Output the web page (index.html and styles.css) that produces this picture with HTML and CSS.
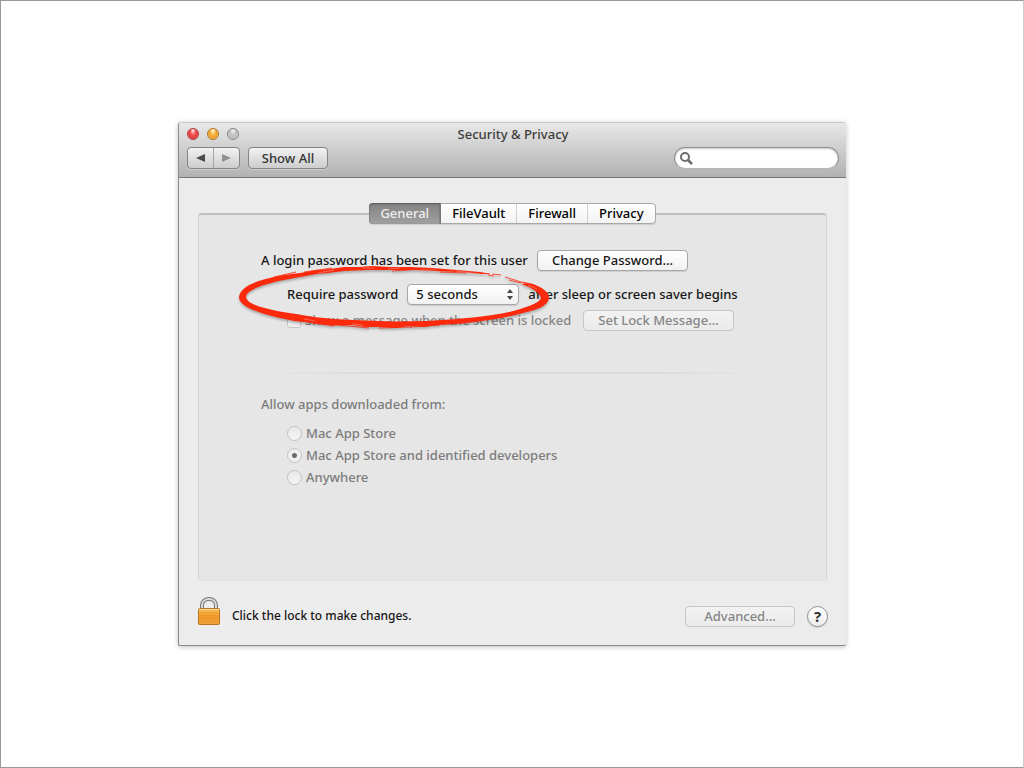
FILE: index.html
```html
<!DOCTYPE html>
<html lang="en">
<head>
    <meta charset="UTF-8">
    <meta name="viewport" content="width=device-width, initial-scale=1.0">
    <title>Security &amp; Privacy</title>
    <link rel="stylesheet" href="styles.css">
</head>
<body>
    <main class="window">
        <header class="toolbar">
            <div class="title-row">
                <div class="lights">
                    <button class="light red" type="button" aria-label="Close"></button>
                    <button class="light yellow" type="button" aria-label="Minimize"></button>
                    <button class="light grey" type="button" aria-label="Zoom"></button>
                </div>
                <h1>Security &amp; Privacy</h1>
            </div>
            <div class="tools">
                <div class="nav">
                    <button type="button" aria-label="Back"><svg width="10" height="8" viewBox="0 0 10 8"><path d="M0 4L9 0V8Z" fill="#4c4c4c"/></svg></button>
                    <button type="button" aria-label="Forward"><svg width="10" height="8" viewBox="0 0 10 8"><path d="M9 4L0 0V8Z" fill="#909090"/></svg></button>
                </div>
                <button class="show-all" type="button">Show All</button>
                <label class="search">
                    <svg width="13" height="13" viewBox="0 0 13 13" fill="none" stroke="#6e6e6e"><circle cx="5" cy="5" r="4" stroke-width="2"/><path d="M8 8L12 12" stroke-width="2.6"/></svg>
                    <input type="search" aria-label="Search">
                </label>
            </div>
        </header>

        <nav class="tabs">
            <button class="active" type="button">General</button>
            <button type="button">FileVault</button>
            <button type="button">Firewall</button>
            <button type="button">Privacy</button>
        </nav>

        <section class="panel">
            <div class="row">
                <span>A login password has been set for this user</span>
                <button class="btn" type="button">Change Password…</button>
            </div>
            <div class="row require">
                <label for="delay">Require password</label>
                <span class="select">
                    <select id="delay">
                        <option>5 seconds</option>
                    </select>
                    <svg width="6" height="11" viewBox="0 0 6 11"><path d="M3 0L6 4H0ZM3 11L0 7H6Z" fill="#484848"/></svg>
                </span>
                <span>after sleep or screen saver begins</span>
                <svg class="ring" width="322" height="74" viewBox="0 0 322 74">
                    <path fill="#fc2a0c" d="M286 19L299 22C309 26 315 30 315 36C314 44 303 48 289 51C268 57 245 60 223 62L204 63L190 65L176 64L160 66L146 65L132 65L118 63L100 63.500L84 62L72 60L60 59C30 53 5 46 5 35C6 23 28 17 50 13L66 11L83 8L96 7L110 5L126 5L138 4L156 5L176 5L198 6L223 8L246 10L256 12L250 12L223 10L200 9L180 8L156 8L134 8L110 9L94 11L83 12L66 15L50 18C30 22 12 28 12 35C13 44 40 49 62 52L80 55L100 57L130 58.500L160 59.500L192 59L223 57C256 54 275 51 289 46C300 43 306 39 307 36C306 32 301 28 295 25L287 22L293 22Z"/>
                    <path fill="none" stroke="#fc2a0c" stroke-width="0.8" d="M40 15L62 10M70 10L98 6M106 9L132 5M158 9L190 7M206 10L232 11M246 11L256 12M258 12L267 13M254 13L260 14M271 15L281 18M275 18L287 21M281 18L292 22M50 54L76 60M60 58L100 64M104 63L135 66M145 66L178 65M176 65L206 63"/>
                    <path fill="none" stroke="#ee8f83" stroke-width="0.6" d="M84 11L100 8M128 6L140 6M154 7L166 6M187 8L202 8M222 9L239 11M70 57L81 59M118 62L129 63M294 23L303 27"/>
                </svg>
            </div>
            <div class="row message">
                <input type="checkbox" id="show-message" disabled>
                <label for="show-message">Show a message when the screen is locked</label>
                <button class="btn" type="button" disabled>Set Lock Message…</button>
            </div>

            <hr>

            <p id="allow">Allow apps downloaded from:</p>
            <div class="radios" role="radiogroup" aria-labelledby="allow">
                <label><input type="radio" name="apps" disabled>Mac App Store</label>
                <label><input type="radio" name="apps" checked disabled>Mac App Store and identified developers</label>
                <label><input type="radio" name="apps" disabled>Anywhere</label>
            </div>
        </section>

        <footer>
            <button class="lock" type="button" aria-label="Lock">
                <svg width="22" height="29" viewBox="0 0 22 29">
                    <defs>
                        <linearGradient id="gold" x1="0" x2="0" y1="0" y2="1">
                            <stop offset="0" stop-color="#fbc25c"/>
                            <stop offset="0.5" stop-color="#f29a2a"/>
                            <stop offset="1" stop-color="#efa03a"/>
                        </linearGradient>
                    </defs>
                    <path d="M4 13V8.500C4 4.500 7 2 11 2S18 4.500 18 8.500V13" fill="none" stroke="#777" stroke-width="4"/>
                    <path d="M4 13V8.500C4 4.500 7 2 11 2S18 4.500 18 8.500V13" fill="none" stroke="#d9d9d9" stroke-width="2"/>
                    <rect x="0.500" y="11.500" width="21" height="16" rx="1" fill="url(#gold)" stroke="#b87422"/>
                    <path d="M1 12.500H21" stroke="#ffdc94"/>
                    <path d="M2 15.500H20M2 18.500H20M2 21.500H20M2 24.500H20" stroke="#e38c22" stroke-opacity="0.4"/>
                </svg>
            </button>
            <span class="hint">Click the lock to make changes.</span>
            <button class="btn advanced" type="button" disabled>Advanced…</button>
            <button class="help" type="button" aria-label="Help">?</button>
        </footer>
    </main>
</body>
</html>
```
FILE: styles.css
```css
* {
    box-sizing: border-box;
}

body {
    margin: 0;
    min-height: 100vh;
    display: flex;
    align-items: center;
    justify-content: center;
    background: #fff;
    border: 1px solid #999;
    border-right-color: #ccc;
    font-family: "Noto Sans", "Open Sans", sans-serif;
    font-size: 13px;
    line-height: 18px;
    font-weight: 500;
    color: #161616;
}

button, input, select {
    font: inherit;
    color: inherit;
    margin: 0;
    padding: 0;
}

button {
    display: flex;
    align-items: center;
    justify-content: center;
    white-space: nowrap;
}

svg {
    display: block;
    flex: none;
}

.window {
    width: 100%;
    max-width: 668px;
    background: #ececec;
    border: 1px solid #8b8b8b;
    border-width: 1px 0 1px 1px;
    border-top-color: #c8c8c8;
    border-radius: 3px 3px 2px 2px;
    box-shadow: 0 1px 5px rgba(0, 0, 0, 0.25);
}

.toolbar {
    padding: 2px 7px 8px 8px;
    background: linear-gradient(#e8e8e8, #b1b1b1);
    border-bottom: 1px solid #777;
    border-radius: 2px 2px 0 0;
}

.title-row {
    display: grid;
    grid-template-columns: 1fr auto 1fr;
    align-items: center;
}

h1 {
    margin: 0;
    font-size: 13px;
    font-weight: 500;
    color: #3c3c3c;
}

.lights {
    display: flex;
    gap: 8px;
}

.light {
    width: 12px;
    height: 12px;
    border: 1px solid #858585;
    border-radius: 50%;
}

.light.red {
    background: radial-gradient(ellipse at 50% 15%, #fdd 5%, #f2605b 35%, #e23b3b 60%, #ff9c94);
    border-color: #a83a3a;
}

.light.yellow {
    background: radial-gradient(ellipse at 50% 15%, #fff0cc 5%, #f6b94a 35%, #eda02c 60%, #ffe486);
    border-color: #a8742f;
}

.light.grey {
    background: radial-gradient(ellipse at 50% 15%, #eee 5%, #c9c9c9 35%, #bdbdbd 60%, #eee);
}

.tools {
    display: flex;
    align-items: center;
    gap: 8px;
    margin-top: 4px;
}

.nav, .show-all {
    height: 22px;
    border: 1px solid #858585;
    border-radius: 4px;
    background: linear-gradient(#f2f2f2, #cdcdcd);
    box-shadow: 0 1px 0 #cfcfcf;
}

.nav {
    display: flex;
    width: 53px;
}

.nav button {
    flex: 1;
    border: none;
    background: none;
}

.nav button + button {
    border-left: 1px solid #a5a5a5;
}

.show-all {
    width: 80px;
    color: #333;
}

.search {
    display: flex;
    align-items: center;
    gap: 4px;
    width: 165px;
    height: 22px;
    margin-left: auto;
    padding: 0 8px 0 5px;
    background: #fff;
    border: 1px solid #8f8f8f;
    border-bottom-color: #b5b5b5;
    border-radius: 11px;
    box-shadow: inset 0 1px 2px #c8c8c8;
}

.search input {
    flex: 1;
    min-width: 0;
    border: none;
    outline: none;
    background: none;
}

.tabs {
    position: relative;
    display: flex;
    width: fit-content;
    margin: 25px auto 0;
    height: 21px;
    border: 1px solid #a8a8a8;
    border-radius: 4px;
    background: linear-gradient(#fff, #f2f2f2);
    box-shadow: 0 1px 1px #ccc;
}

.tabs button {
    padding: 0 11px 1px;
    border: none;
    border-right: 1px solid #d0d0d0;
    background: none;
    color: #000;
}

.tabs button:last-child {
    border-right: none;
}

.tabs .active {
    margin: -1px 0 -1px -1px;
    border-right-color: #777;
    border-radius: 4px 0 0 4px;
    background: linear-gradient(#838383, #a0a0a0);
    box-shadow: inset 0 1px 2px #555;
    color: #eee;
}

.panel {
    margin: -11px 19px 0 19px;
    padding: 35px 62px 92px;
    background: #e6e6e6;
    border: 1px solid #d4d4d4;
    border-top: 2px solid #bfbfbf;
    border-bottom-color: #e0e0e0;
    border-radius: 4px;
}

.row {
    display: flex;
    align-items: center;
    gap: 9px;
    white-space: nowrap;
}

.row > span, .row > label {
    padding-bottom: 2px;
}

.btn {
    height: 21px;
    padding: 0 14px 1px;
    border: 1px solid #a6a6a6;
    border-radius: 4px;
    background: linear-gradient(#fff, #f1f1f1);
    box-shadow: 0 1px 1px #ccc;
}

.btn:disabled {
    color: #858585;
    border-color: #c6c6c6;
    background: linear-gradient(#f2f2f2, #ebebeb);
    box-shadow: none;
}

.require {
    position: relative;
    margin: 13px 0 5px;
    padding-left: 26px;
}

.row .select {
    position: relative;
    padding: 0;
}

.select select {
    display: block;
    appearance: none;
    width: 112px;
    height: 21px;
    padding: 0 8px 1px;
    border: 1px solid #a6a6a6;
    border-radius: 4px;
    background: linear-gradient(#fff, #f1f1f1);
    box-shadow: 0 1px 1px #ccc;
}

.select svg {
    position: absolute;
    right: 6px;
    top: 5px;
    pointer-events: none;
}

.ring {
    position: absolute;
    left: -27px;
    top: -22px;
    filter: drop-shadow(0 2px 1px rgba(0, 0, 0, 0.25));
    pointer-events: none;
}

.message {
    padding-left: 26px;
    color: #858585;
}

.message input {
    appearance: none;
    width: 14px;
    height: 14px;
    margin-right: -5px;
    border: 1px solid #c6c6c6;
    border-radius: 3px;
    background: #eee;
}

.message .btn {
    margin-left: 3px;
}

hr {
    height: 2px;
    margin: 41px 0 21px;
    border: none;
    background: linear-gradient(to right, transparent, #dadada 25%, #dadada 75%, transparent);
}

.panel p {
    margin: 0 0 9px;
    color: #7c7c7c;
}

.radios {
    padding-left: 26px;
    color: #7c7c7c;
}

.radios label {
    display: flex;
    align-items: center;
    gap: 4px;
    height: 22px;
}

.radios input {
    appearance: none;
    width: 15px;
    height: 15px;
    border: 1px solid #c2c2c2;
    border-radius: 50%;
    background: linear-gradient(#e9e9e9, #f4f4f4);
}

.radios input:checked {
    background: radial-gradient(circle, #6c6c6c 2px, #f0f0f0 3px);
}

footer {
    display: flex;
    align-items: center;
    gap: 12px;
    height: 38px;
    margin: 16px 18px 10px 19px;
}

.lock {
    align-self: flex-start;
    border: none;
    background: none;
}

.hint {
    font-size: 12px;
}

.advanced {
    width: 110px;
    margin-left: auto;
}

.help {
    width: 21px;
    height: 21px;
    border: 1px solid #8f8f8f;
    border-radius: 50%;
    background: linear-gradient(#fff, #ededed);
    box-shadow: 0 1px 1px #ccc;
    font-size: 15px;
    font-weight: bold;
    color: #333;
}
```
